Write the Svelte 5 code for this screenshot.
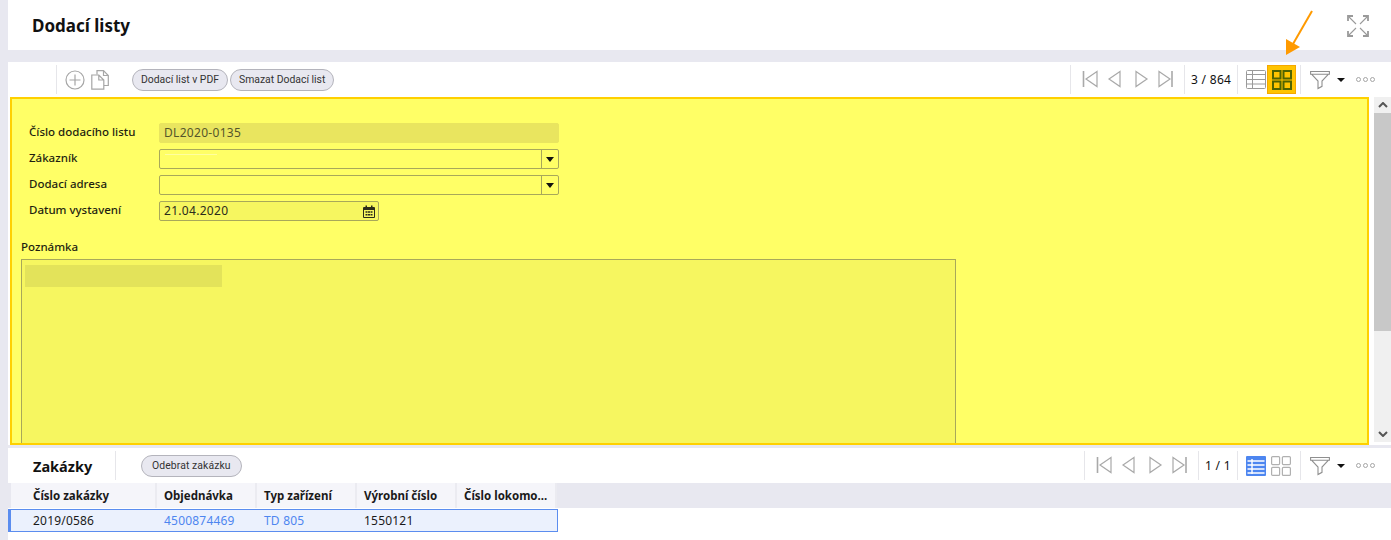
<script lang="ts">
	const columns = [
		{ label: 'Číslo zakázky', width: 146 },
		{ label: 'Objednávka', width: 100 },
		{ label: 'Typ zařízení', width: 100 },
		{ label: 'Výrobní číslo', width: 100 },
		{ label: 'Číslo lokomo...', width: 100 }
	];
</script>

{#snippet nav()}
	<div class="group nav">
		<svg viewBox="0 0 92 20" width="92" height="20" fill="none" stroke="#a9a9a9" stroke-width="1.2">
			<path d="M1.5 1v16" stroke-width="1.6" />
			<path d="M15 1.5 4 9l11 7.5z" />
			<path d="M38 1.5 27 9l11 7.5z" />
			<path d="M54 1.5 65 9l-11 7.5z" />
			<path d="M77 1.5 88 9l-11 7.5z" />
			<path d="M90 1v16" stroke-width="1.6" />
		</svg>
	</div>
{/snippet}

{#snippet filter()}
	<div class="group filter">
		<svg viewBox="0 0 20 20" width="20" height="20" fill="none" stroke="#8f8f8f" stroke-width="1.1">
			<path d="M.6 1.5h18.8v2.7H.6zM1.5 4.2 8 11v7.5l4-2.2V11l6.5-6.8" />
		</svg>
		<span class="caret"></span>
		<span class="dots"><i></i><i></i><i></i></span>
	</div>
{/snippet}

<div class="page">
	<header class="top">
		<h1>Dodací listy</h1>
		<svg class="expand" viewBox="0 0 22 22" width="22" height="22" fill="none" stroke="#9a9a9a" stroke-width="1.1">
			<path d="M1 6V1h5M16 1h5v5M21 16v5h-5M6 21H1v-5" stroke-width="1.8" />
			<path d="M2 2l7 7M20 2l-7 7M20 20l-7-7M2 20l7-7" />
		</svg>
	</header>

	<div class="toolbar main-bar">
		<div class="left">
			<div class="divider"></div>
			<svg class="ic-plus" viewBox="0 0 20 20" width="20" height="20" fill="none" stroke="#a6a6a6" stroke-width="1.2">
				<circle cx="10" cy="10" r="9" />
				<path d="M10 4.5v11M4.5 10h11" />
			</svg>
			<svg class="ic-copy" viewBox="0 0 18 20" width="18" height="20" fill="none" stroke="#a6a6a6" stroke-width="1.2">
				<path d="M6 4.5V.7h6.5l4.8 4.8v10H13" />
				<path d="M12.5.7v4.8h4.8" />
				<path d="M.8 5h7l5 5v9.2H.8zM7.8 5v5h5" />
			</svg>
			<div class="buttons">
				<button>Dodací list v PDF</button>
				<button>Smazat Dodací list</button>
			</div>
		</div>
		<div class="right">
			{@render nav()}
			<div class="group pager wide">3 / 864</div>
			<div class="group views">
				<svg viewBox="0 0 20 20" width="20" height="20" fill="none" stroke="#9a9a9a" stroke-width="1">
					<rect x="0.5" y="0.5" width="19" height="18" rx="1" />
					<path d="M0.5 4.5h19M0.5 9.5h19M0.5 14h19M6.5 .5v18" />
				</svg>
				<span class="active-view">
					<svg viewBox="0 0 20 20" width="20" height="20" fill="none" stroke="#4f6400" stroke-width="2">
						<rect x="1" y="1" width="7.5" height="7.5" />
						<rect x="11.5" y="1" width="7.5" height="7.5" />
						<rect x="1" y="11.5" width="7.5" height="7.5" />
						<rect x="11.5" y="11.5" width="7.5" height="7.5" />
					</svg>
				</span>
			</div>
			{@render filter()}
		</div>
	</div>

	<div class="form-area">
		<div class="panel">
			<div class="fields">
				<div class="field">
					<span class="label">Číslo dodacího listu</span>
					<div class="input readonly">DL2020-0135</div>
				</div>
				<div class="field">
					<span class="label">Zákazník</span>
					<div class="input select"><span class="smudge"></span><span class="drop"><i></i></span></div>
				</div>
				<div class="field">
					<span class="label">Dodací adresa</span>
					<div class="input select"><span class="drop"><i></i></span></div>
				</div>
				<div class="field">
					<span class="label">Datum vystavení</span>
					<div class="input date">
						21.04.2020
						<svg viewBox="0 0 12 13" width="12" height="13">
							<path fill="#2b2b1a" d="M1 2h1.5V.5h1.5V2h4V.5h1.5V2H11a1 1 0 0 1 1 1v9a1 1 0 0 1-1 1H1a1 1 0 0 1-1-1V3a1 1 0 0 1 1-1zm0 3v7h10V5z" />
							<path fill="#2b2b1a" d="M2.5 6.2h2v1.6h-2zM5 6.2h2v1.6H5zM7.5 6.2h2v1.6h-2zM2.5 9h2v1.6h-2zM5 9h2v1.6H5zM7.5 9h2v1.6h-2z" />
						</svg>
					</div>
				</div>
			</div>
			<div class="note">
				<span class="label">Poznámka</span>
				<div class="textarea"><span class="mark"></span></div>
			</div>
		</div>
		<div class="scrollbar">
			<span class="sb-btn"><svg viewBox="0 0 10 6" width="10" height="6" fill="none" stroke="#555" stroke-width="2"><path d="M1 5l4-4 4 4" /></svg></span>
			<span class="sb-track"><span class="sb-thumb"></span></span>
			<span class="sb-btn"><svg viewBox="0 0 10 6" width="10" height="6" fill="none" stroke="#555" stroke-width="2"><path d="M1 1l4 4 4-4" /></svg></span>
		</div>
	</div>

	<div class="toolbar sub-bar">
		<div class="left">
			<h2>Zakázky</h2>
			<div class="divider"></div>
			<div class="buttons"><button class="remove">Odebrat zakázku</button></div>
		</div>
		<div class="right">
			{@render nav()}
			<div class="group pager">1 / 1</div>
			<div class="group views">
				<svg viewBox="0 0 20 20" width="20" height="20">
					<rect width="20" height="20" rx="1" fill="#4d86f0" />
					<path d="M1.5 5h17M1.5 9h17M1.5 13h17M1.5 17h17M6 3v15" stroke="#fff" stroke-width="1.4" />
				</svg>
				<span class="plain-view">
					<svg viewBox="0 0 20 20" width="20" height="20" fill="none" stroke="#b0b0b0" stroke-width="1.2">
						<rect x="0.6" y="0.6" width="8" height="8" rx="1" />
						<rect x="11.4" y="0.6" width="8" height="8" rx="1" />
						<rect x="0.6" y="11.4" width="8" height="8" rx="1" />
						<rect x="11.4" y="11.4" width="8" height="8" rx="1" />
					</svg>
				</span>
			</div>
			{@render filter()}
		</div>
	</div>

	<div class="table">
		<div class="thead">
			{#each columns as col}
				<div class="th" style="width: {col.width}px">{col.label}</div>
			{/each}
		</div>
		<div class="row">
			<div class="td" style="width: 146px">2019/0586</div>
			<div class="td link" style="width: 100px">4500874469</div>
			<div class="td link" style="width: 100px">TD 805</div>
			<div class="td" style="width: 100px">1550121</div>
			<div class="td" style="width: 100px"></div>
		</div>
	</div>

	<svg class="arrow" viewBox="0 0 40 48" width="40" height="48">
		<path d="M33 2 14 35" stroke="#ff9a00" stroke-width="2" fill="none" />
		<path d="M7 46V30l14 8z" fill="#ff9a00" />
	</svg>
</div>

<style>
	:global(body) {
		margin: 0;
		background: #e8e8f0;
		font-family: 'Noto Sans', 'Open Sans', sans-serif;
		color: #1a1a1a;
		overflow: hidden;
	}

	.page {
		position: relative;
		height: 540px;
		padding-left: 8px;
		display: flex;
		flex-direction: column;
		overflow: hidden;
	}

	.top {
		height: 50px;
		background: #fff;
		display: flex;
		align-items: center;
		justify-content: space-between;
		padding: 0 22px 0 24px;
		margin-bottom: 12px;
		flex: none;
	}

	h1 {
		margin: 0;
		font-size: 17px;
		font-weight: 700;
		color: #111;
	}

	.expand {
		margin-top: 1px;
	}

	.toolbar {
		display: flex;
		justify-content: space-between;
		align-items: center;
		background: #fff;
		height: 35px;
		flex: none;
	}

	.left {
		display: flex;
		align-items: center;
		height: 100%;
	}

	.main-bar .left {
		padding-left: 48px;
	}

	.divider {
		width: 1px;
		height: 29px;
		background: #e6e6ea;
	}

	.ic-plus {
		margin-left: 8px;
	}

	.ic-copy {
		margin-left: 6px;
	}

	.buttons {
		display: flex;
		gap: 2px;
		margin-left: 23px;
	}

	button {
		height: 22px;
		padding: 0 8px;
		border: 1px solid #b4b4bc;
		border-radius: 11px;
		background: #e8e8f0;
		color: #333;
		font: 10.4px 'Roboto', sans-serif;
		white-space: nowrap;
	}

	.remove {
		padding: 0 10px;
		letter-spacing: 0.1px;
	}

	.right {
		display: flex;
		align-items: center;
		height: 100%;
	}

	.group {
		height: 29px;
		display: flex;
		align-items: center;
		border-left: 1px solid #e6e6ea;
		box-sizing: border-box;
	}

	.nav {
		width: 114px;
		padding-left: 11px;
	}

	.pager {
		width: 39px;
		padding-left: 6px;
		font-size: 12px;
		letter-spacing: 0.3px;
		white-space: nowrap;
		color: #111;
	}

	.pager.wide {
		width: 53px;
	}

	.views {
		width: 63px;
		padding-left: 8px;
	}

	.active-view {
		width: 29px;
		height: 29px;
		margin-left: 1px;
		background: #ffc400;
		border: 1px solid #f5a800;
		box-sizing: border-box;
		display: flex;
		align-items: center;
		justify-content: center;
	}

	.plain-view {
		margin-left: 5px;
		display: flex;
	}

	.filter {
		width: 91px;
		padding-left: 9px;
	}

	.caret {
		width: 0;
		height: 0;
		margin-left: 7px;
		border: 4px solid transparent;
		border-top: 4px solid #111;
		border-bottom: 0;
	}

	.dots {
		display: flex;
		gap: 2px;
		margin-left: 11px;
	}

	.dots i {
		width: 5px;
		height: 5px;
		box-sizing: border-box;
		border: 1px solid #a5a5a5;
		border-radius: 50%;
	}

	.form-area {
		display: flex;
		height: 348px;
		flex: none;
		background: #fff;
		padding-left: 2px;
	}

	.panel {
		width: 1359px;
		box-sizing: border-box;
		background: #ffff66;
		border: 2px solid #ffd000;
		overflow: hidden;
		padding: 24px 0 0 9px;
	}

	.fields {
		display: flex;
		flex-direction: column;
		gap: 6px;
		padding-left: 8px;
	}

	.field {
		display: flex;
		align-items: center;
		height: 20px;
	}

	.label {
		font-size: 11.5px;
		font-weight: 500;
		color: #1f1f10;
		white-space: nowrap;
	}

	.field .label {
		width: 130px;
		margin-top: -4px;
	}

	.input {
		position: relative;
		width: 400px;
		height: 20px;
		box-sizing: border-box;
		border: 1px solid #a8a85a;
		border-radius: 2px;
		padding-left: 4px;
		font-size: 12px;
		line-height: 18px;
	}

	.readonly {
		background: #e9e55f;
		border-color: #e9e55f;
		color: #55552a;
		letter-spacing: 0.3px;
	}

	.select {
		display: flex;
		justify-content: flex-end;
	}

	.smudge {
		position: absolute;
		left: 5px;
		top: 4px;
		width: 52px;
		height: 1px;
		background: #ffffa0;
	}

	.drop {
		width: 16px;
		border-left: 1px solid #a8a85a;
		display: flex;
		align-items: center;
		justify-content: center;
	}

	.drop i {
		width: 0;
		height: 0;
		border: 4px solid transparent;
		border-top: 5px solid #111;
		border-bottom: 0;
	}

	.date {
		width: 220px;
		background: #f6f660;
		letter-spacing: 0.3px;
		color: #2b2b1a;
		display: flex;
		justify-content: space-between;
		align-items: center;
		padding-right: 3px;
	}

	.note {
		margin-top: 18px;
	}

	.note .label {
		display: block;
		line-height: 15px;
		height: 20px;
	}

	.textarea {
		width: 935px;
		height: 400px;
		box-sizing: border-box;
		border: 1px solid #a8a85a;
		background: #f6f660;
		padding: 5px 3px;
	}

	.mark {
		display: block;
		width: 197px;
		height: 22px;
		background: #e3e35a;
	}

	.scrollbar {
		width: 17px;
		margin-left: 5px;
		height: 345px;
		display: flex;
		flex-direction: column;
		background: #f0f0f0;
	}

	.sb-btn {
		height: 16px;
		flex: none;
		display: flex;
		align-items: center;
		justify-content: center;
		background: #f0f0f0;
	}

	.sb-track {
		flex: 1;
	}

	.sb-thumb {
		display: block;
		height: 218px;
		background: #c8c8c8;
	}

	.sub-bar {
		margin-top: 3px;
	}

	h2 {
		margin: 0 22px 0 25px;
		width: 60px;
		font-size: 14.5px;
		font-weight: 700;
		color: #111;
	}

	.sub-bar .buttons {
		margin-left: 25px;
	}

	.table {
		flex: 1;
		background: #fff;
	}

	.thead {
		display: flex;
		height: 25px;
		background: #e8e8f0;
		padding-left: 3px;
		margin-bottom: 1px;
	}

	.th {
		box-sizing: border-box;
		background: #f5f5fa;
		border-right: 2px solid #ebebf1;
		padding-left: 22px;
		font-size: 11.5px;
		font-weight: 700;
		line-height: 25px;
		white-space: nowrap;
		overflow: hidden;
	}

	.th + .th {
		padding-left: 7px;
	}

	.row {
		display: flex;
		width: 546px;
		height: 21px;
		box-sizing: content-box;
		background: #ebf1fd;
		border: 1px solid #5b8def;
		border-left: 3px solid #5b8def;
	}

	.td {
		box-sizing: border-box;
		padding-left: 22px;
		font-size: 12px;
		line-height: 22px;
		letter-spacing: 0.2px;
	}

	.td + .td {
		padding-left: 7px;
	}

	.link {
		color: #4d86f0;
	}

	.arrow {
		position: absolute;
		left: 1279px;
		top: 9px;
	}
</style>
